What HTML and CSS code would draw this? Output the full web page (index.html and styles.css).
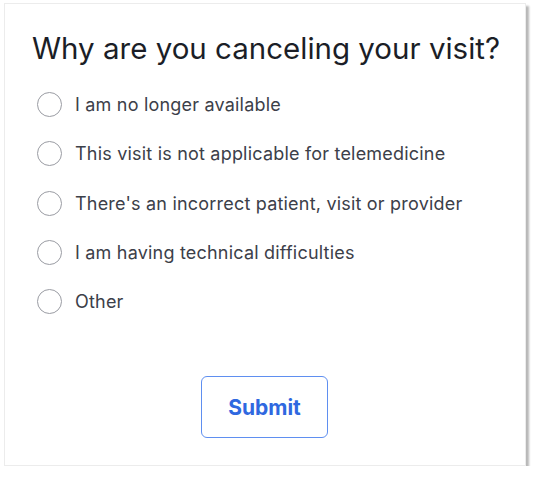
FILE: index.html
```html
<!DOCTYPE html>
<html>
<head>
<meta charset="utf-8">
<link rel="stylesheet" href="styles.css">
</head>
<body>
<div class="card">
  <h1 class="title">Why are you canceling your visit?</h1>
  <ul class="options">
    <li class="option"><span class="radio"></span><span class="label">I am no longer available</span></li>
    <li class="option"><span class="radio"></span><span class="label">This visit is not applicable for telemedicine</span></li>
    <li class="option"><span class="radio"></span><span class="label">There's an incorrect patient, visit or provider</span></li>
    <li class="option"><span class="radio"></span><span class="label">I am having technical difficulties</span></li>
    <li class="option"><span class="radio"></span><span class="label">Other</span></li>
  </ul>
  <div class="actions">
    <button class="submit">Submit</button>
  </div>
</div>
</body>
</html>
```
FILE: styles.css
```css
html, body {
  margin: 0;
  padding: 0;
  background: #ffffff;
}
body {
  padding: 3px 0 0 4px;
  font-family: Inter, "Noto Sans", sans-serif;
}
.card {
  box-sizing: border-box;
  width: 522px;
  height: 463px;
  background: #fff;
  border: 1px solid #ececec;
  box-shadow: 3px 3px 2px #b8b8b8;
  padding: 27px 0 0 27px;
}
.title {
  margin: 0;
  font-size: 29.5px;
  font-weight: 400;
  color: #1b1e27;
  line-height: 34px;
  letter-spacing: 0;
}
.options {
  list-style: none;
  margin: 27px 0 0 0;
  padding: 0 0 0 5px;
  display: flex;
  flex-direction: column;
  gap: 24.25px;
}
.option {
  display: flex;
  align-items: center;
  gap: 13px;
  height: 25px;
}
.radio {
  box-sizing: border-box;
  width: 25px;
  height: 25px;
  border: 1.5px solid #9a9ca3;
  border-radius: 50%;
  flex: none;
}
.label {
  font-size: 18px;
  letter-spacing: 0.2px;
  color: #3c4049;
}
.actions {
  display: flex;
  justify-content: center;
  margin-top: 62px;
  padding-right: 28px;
}
.submit {
  box-sizing: border-box;
  width: 127px;
  height: 62px;
  background: #fff;
  border: 1.5px solid #5f8ff0;
  border-radius: 6px;
  color: #2f68e0;
  font-family: Inter, "Noto Sans", sans-serif;
  font-size: 21px;
  font-weight: 700;
}
```
